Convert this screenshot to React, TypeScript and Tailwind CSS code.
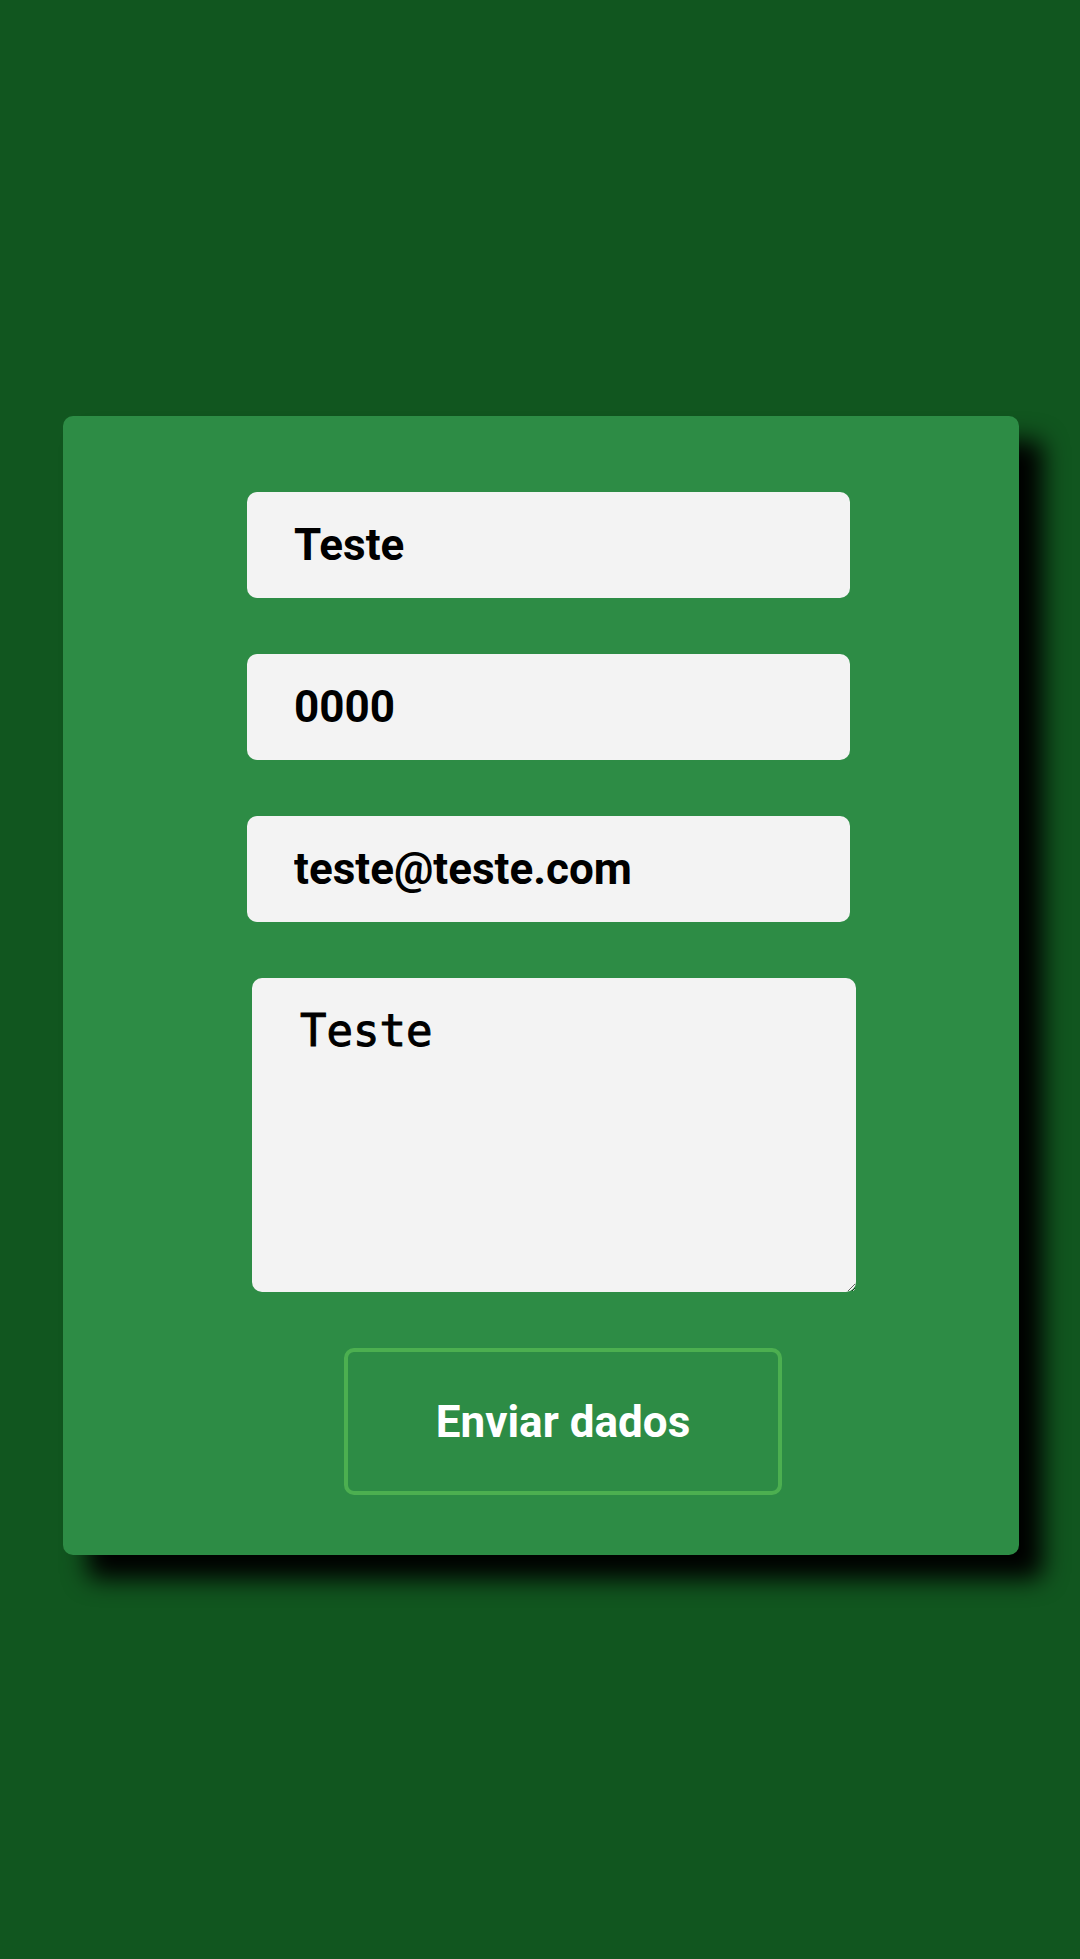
export default function App() {
  return (
    <div className="min-h-[1959px] bg-[#11561f] pt-[416px] font-['Roboto',sans-serif]">
      <form
        className="ml-[63px] w-[956px] rounded-[10px] bg-[#2d8c45] pt-[76px] pb-[60px] shadow-[24px_24px_24px_#000]"
        onSubmit={(e) => e.preventDefault()}
      >
        <div className="ml-[184px] flex w-[603px] flex-col gap-[56px]">
          <input
            type="text"
            defaultValue="Teste"
            className="h-[106px] w-full rounded-[10px] bg-[#f3f3f3] pl-[47px] font-['Roboto',sans-serif] text-[44px] font-bold text-black outline-none"
          />
          <input
            type="text"
            defaultValue="0000"
            className="h-[106px] w-full rounded-[10px] bg-[#f3f3f3] pl-[47px] font-['Roboto',sans-serif] text-[44px] font-bold text-black outline-none"
          />
          <input
            type="email"
            defaultValue="teste@teste.com"
            className="h-[106px] w-full rounded-[10px] bg-[#f3f3f3] pl-[47px] font-['Roboto',sans-serif] text-[44px] font-bold text-black outline-none"
          />
        </div>
        <textarea
          defaultValue="Teste"
          className="mt-[56px] ml-[189px] block h-[314px] w-[604px] rounded-[10px] bg-[#f3f3f3] px-[48px] pt-[20px] font-['DejaVu_Sans_Mono',monospace] text-[44px] text-black outline-none [-webkit-text-stroke:1px_#000]"
        />
        <button
          type="submit"
          className="mt-[56px] ml-[281px] block h-[147px] w-[438px] rounded-[10px] border-[4px] border-[#4caf50] bg-transparent text-[44px] font-bold text-white"
        >
          Enviar dados
        </button>
      </form>
    </div>
  )
}
